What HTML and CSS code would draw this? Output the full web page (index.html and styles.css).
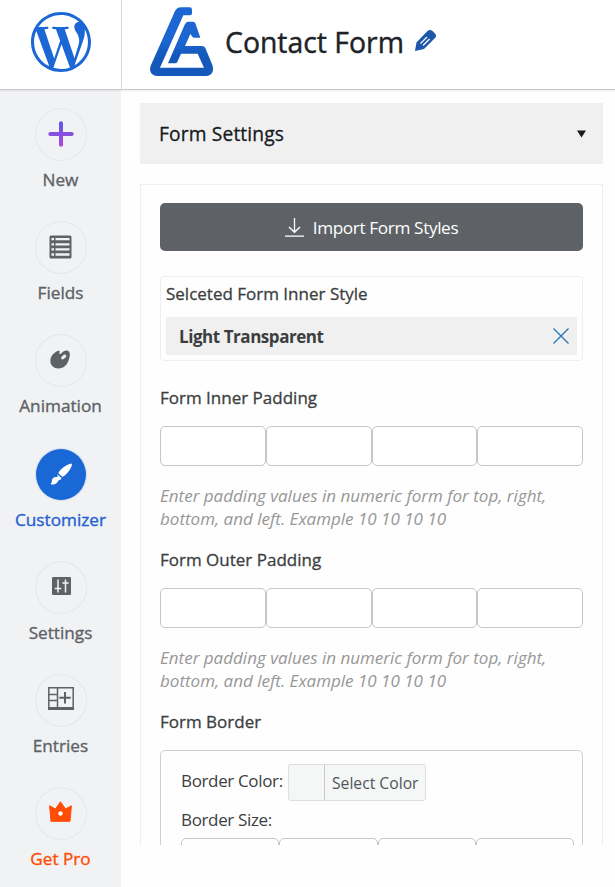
FILE: index.html
```
<!DOCTYPE html>
<html lang="en">
<head>
    <meta charset="UTF-8">
    <meta name="viewport" content="width=device-width, initial-scale=1.0">
    <title>Contact Form</title>
    <link rel="stylesheet" href="styles.css">
</head>
<body>
    <!-- Top bar -->
    <header class="header">
        <a class="wp-logo" href="#">
            <svg width="60" height="60" viewBox="0 0 24 24"><path fill-rule="evenodd" d="M21.469 6.825c.84 1.537 1.318 3.3 1.318 5.175 0 3.979-2.156 7.456-5.363 9.325l3.295-9.527c.615-1.54.82-2.771.82-3.864 0-.405-.026-.78-.07-1.11m-7.981.105c.647-.03 1.232-.105 1.232-.105.582-.075.514-.93-.067-.899 0 0-1.755.135-2.88.135-1.064 0-2.85-.15-2.85-.15-.585-.03-.661.855-.075.885 0 0 .54.061 1.125.09l1.68 4.605-2.37 7.08L5.354 6.9c.649-.03 1.234-.1 1.234-.1.585-.075.516-.93-.065-.896 0 0-1.746.138-2.874.138-.2 0-.438-.008-.69-.015C4.911 3.15 8.235 1.215 12 1.215c2.809 0 5.365 1.072 7.286 2.833-.046-.003-.091-.009-.141-.009-1.06 0-1.812.923-1.812 1.914 0 .89.513 1.643 1.06 2.531.411.72.89 1.643.89 2.977 0 .915-.354 1.994-.821 3.479l-1.075 3.585-3.9-11.61.001.014zM12 22.784c-1.059 0-2.081-.153-3.048-.437l3.237-9.406 3.315 9.087c.024.053.05.101.078.149-1.12.393-2.325.609-3.582.609M1.211 12c0-1.564.336-3.05.935-4.39L7.29 21.709C3.694 19.96 1.212 16.271 1.211 12M12 0C5.385 0 0 5.385 0 12s5.385 12 12 12 12-5.385 12-12S18.615 0 12 0"/></svg>
        </a>
        <div class="title-bar">
            <svg class="brand" width="64" height="70" viewBox="0 0 192 210">
                <defs>
                    <linearGradient id="brand-fill" x1="0" y1="0" x2="0" y2="1">
                        <stop offset="0.5" stop-color="#1b66d0"/>
                        <stop offset="0.7" stop-color="#1558bb"/>
                    </linearGradient>
                </defs>
                <path fill="url(#brand-fill)" d="M2 176 L74 14 Q80 1 94 1 H119 Q126 1 126 8 V19 Q126 25 120 25 H100 L30 182 H162 L143 140 H93 L82 165 Q80 169 75 169 H54 L104 53 Q108 44 114 44 H130 Q134 44 136 49 L151 92 H132 Q128 92 126 88 L121 81 L105 117 H156 Q163 117 166 123 L187 174 Q194 195 178 205 Q175 207 168 207 H21 Q4 206 0 190 Q0 182 2 176 Z"/>
            </svg>
            <h1>Contact Form</h1>
            <svg class="edit" width="23" height="23" viewBox="0 0 23 23">
                <path fill="#1c57ab" d="M1 22 2.5 13.5 13.5 2 Q16 0 18.5 2 L21.5 5 Q23 7 21 9 L10 20Z"/>
                <path stroke="#fff" stroke-width="1.2" d="M6.500 14.500 13 8M9 16.500 15.500 10"/>
            </svg>
        </div>
    </header>

    <div class="layout">
        <!-- Sidebar -->
        <nav class="sidebar">
            <a class="nav-item" href="#">
                <span class="nav-icon">
                    <svg width="26" height="26" viewBox="0 0 26 26" fill="none" stroke="url(#plus-fill)" stroke-width="4" stroke-linecap="round">
                        <defs>
                            <linearGradient id="plus-fill" gradientUnits="userSpaceOnUse" x1="0" y1="0" x2="0" y2="26">
                                <stop offset="0" stop-color="#5a5be6"/>
                                <stop offset="0.5" stop-color="#8650df"/>
                                <stop offset="1" stop-color="#ba43da"/>
                            </linearGradient>
                        </defs>
                        <path d="M13 2.300V23.700M2.300 13H23.700"/>
                    </svg>
                </span>
                <span>New</span>
            </a>
            <a class="nav-item" href="#">
                <span class="nav-icon">
                    <svg width="23" height="24" viewBox="0 0 23 24">
                        <rect x="0.500" y="0.500" width="22" height="23" rx="1.500" fill="#5d6267"/>
                        <path stroke="#f1f2f4" stroke-width="2.300" d="M2.500 4.200H5M2.500 9.300H5M2.500 14.400H5M2.500 19.500H5M6.500 4.200H20.500M6.500 9.300H20.500M6.500 14.400H20.500M6.500 19.500H20.500"/>
                    </svg>
                </span>
                <span>Fields</span>
            </a>
            <a class="nav-item" href="#">
                <span class="nav-icon nav-icon-palette">
                    <svg width="20" height="19" viewBox="0 0 20 19">
                        <path fill="#5d6267" d="M7.500 1C9 .2 10.200 1 9.500 2.500C9 4 10.200 4.500 11.500 3.200C13 1.500 15 .3 17 .6C20 1 20.500 4.500 19 9C17.500 14.500 14 18.500 8.500 18.500C3.500 18.500 0 15 .4 10C.7 6 3.500 3 7.500 1Z"/>
                        <ellipse cx="13.700" cy="7" rx="3" ry="1.700" transform="rotate(-38 13.700 7)" fill="#f1f2f4"/>
                    </svg>
                </span>
                <span>Animation</span>
            </a>
            <a class="nav-item active" href="#">
                <span class="nav-icon">
                    <svg width="22" height="22" viewBox="0 0 22 22" fill="#fff">
                        <path d="M21.500 .6C22.300 1.200 21.800 3 21 4.500C19 8.500 16 12 12.500 14L8.300 10.300C10 6 17 1.500 21.500 .6Z"/>
                        <path d="M7.500 11.500 11.500 15C11 17 9.500 16.800 8.500 17.500C7.500 20.500 4 22.500 .5 21C2.500 19.500 1.500 18 2.300 16C3.300 14 5.500 13.800 7.500 14C7.800 13 7.300 12.500 7.500 11.500Z"/>
                    </svg>
                </span>
                <span>Customizer</span>
            </a>
            <a class="nav-item" href="#">
                <span class="nav-icon nav-icon-sliders">
                    <svg width="19" height="18" viewBox="0 0 19 18">
                        <rect width="19" height="18" rx="1" fill="#5d6267"/>
                        <path stroke="#f1f2f4" stroke-width="1.500" d="M6 2.500V15.500M2.800 11.500H9.200M13.500 2.500V15.500M10.300 6H16.700"/>
                    </svg>
                </span>
                <span>Settings</span>
            </a>
            <a class="nav-item" href="#">
                <span class="nav-icon nav-icon-table">
                    <svg width="26" height="23" viewBox="0 0 26 23" fill="none" stroke="#5d6267">
                        <path stroke-width="1.500" d="M.8 22V.8H25.200V22M9.500 1V21M1 7.500H9.500M1 13.500H9.500"/>
                        <path stroke-width="3" d="M0 21.500H26"/>
                        <path stroke-width="2" d="M17 5V16.500M11.300 10.700H22.700"/>
                    </svg>
                </span>
                <span>Entries</span>
            </a>
            <a class="nav-item pro" href="#">
                <span class="nav-icon nav-icon-crown">
                    <svg width="23" height="21" viewBox="0 0 23 21">
                        <path fill="#ff4d05" stroke="#ff4d05" stroke-linejoin="round" d="M.6 4.800 6.500 8 11.500 .8 16.500 8 22.400 4.800 21 20.300H2Z"/>
                        <circle cx="11.500" cy="12.500" r="2.200" fill="#fff"/>
                    </svg>
                </span>
                <span>Get Pro</span>
            </a>
        </nav>

        <!-- Form customizer -->
        <main class="content">
            <div class="accordion">
                <span>Form Settings</span>
                <svg width="9" height="8" viewBox="0 0 9 8"><path fill="#17191c" d="M0 .5H9L4.500 7.500Z"/></svg>
            </div>

            <div class="panel">
                <button type="button" class="import-btn">
                    <svg width="19" height="19" viewBox="0 0 19 19" fill="none" stroke="#fff" stroke-width="1.300">
                        <path d="M9.500 0V14M4 9 9.500 14.300 15 9M0 18.200H19"/>
                    </svg>
                    <span>Import Form Styles</span>
                </button>

                <div class="style-box">
                    <div class="style-title">Selceted Form Inner Style</div>
                    <div class="style-name">
                        <strong>Light Transparent</strong>
                        <svg width="16" height="16" viewBox="0 0 16 16" stroke="#2271b1" stroke-width="1.200"><path d="M.5.5 15.500 15.500M15.500.5.5 15.500"/></svg>
                    </div>
                </div>

                <div class="form-group">
                    <label>Form Inner Padding</label>
                    <div class="inputs">
                        <input type="text"><input type="text"><input type="text"><input type="text">
                    </div>
                    <p class="hint">Enter padding values in numeric form for top, right,<br>bottom, and left. Example 10 10 10 10</p>
                </div>

                <div class="form-group">
                    <label>Form Outer Padding</label>
                    <div class="inputs">
                        <input type="text"><input type="text"><input type="text"><input type="text">
                    </div>
                    <p class="hint">Enter padding values in numeric form for top, right,<br>bottom, and left. Example 10 10 10 10</p>
                </div>

                <div class="form-group">
                    <label>Form Border</label>
                    <div class="border-box">
                        <div class="color-row">
                            <span class="color-label">Border Color:</span>
                            <button type="button" class="color-btn"><span>Select Color</span></button>
                        </div>
                        <div class="size-label">Border Size:</div>
                        <div class="inputs">
                            <input type="text"><input type="text"><input type="text"><input type="text">
                        </div>
                    </div>
                </div>
            </div>
        </main>
    </div>
</body>
</html>
```
FILE: styles.css
```
* {
    margin: 0;
    padding: 0;
    box-sizing: border-box;
    font-family: "Open Sans", "Noto Sans", sans-serif;
}

body {
    background-color: #fefefe;
    color: #3c3e40;
    font-size: 16.5px;
    height: 887px;
    overflow: hidden;
}

svg {
    display: block;
    flex-shrink: 0;
}

.header {
    position: relative;
    display: flex;
    height: 90px;
    background-color: #fff;
    border-bottom: 1px solid #c9c9cb;
    box-shadow: 0 1px 2px rgba(0, 0, 0, 0.08);
}

.wp-logo {
    width: 122px;
    padding: 12px 0 0 31px;
    border-right: 1px solid #d5d5d7;
    fill: #1a67d5;
}

.title-bar {
    display: flex;
    align-items: flex-start;
    padding-left: 28px;
}

.brand {
    margin-top: 7px;
}

.title-bar h1 {
    width: 179px;
    margin: 22px 0 0 11px;
    font-size: 28.4px;
    font-weight: 500;
    line-height: 40px;
    color: #1d2327;
    white-space: nowrap;
    -webkit-text-stroke: 0.4px;
}

.edit {
    margin: 29px 0 0 10px;
}

.layout {
    display: flex;
    height: 797px;
}

/* Sidebar */
.sidebar {
    width: 121px;
    padding-top: 18px;
    background-color: #f1f2f4;
}

.nav-item {
    display: flex;
    flex-direction: column;
    align-items: center;
    height: 113.2px;
    font-size: 17.2px;
    font-weight: 500;
    line-height: 24px;
    color: #5d6267;
    text-decoration: none;
    -webkit-text-stroke: 0.35px;
}

.nav-icon {
    display: flex;
    align-items: center;
    justify-content: center;
    width: 52px;
    height: 53px;
    margin-bottom: 7px;
    padding-bottom: 2px;
    border: 1px solid #e6e7e9;
    border-radius: 50%;
}

.nav-icon-palette {
    padding: 0 2px 3px 0;
}

.nav-icon-sliders {
    padding: 0 0 2px 1px;
}

.nav-icon-table {
    padding-bottom: 3px;
}

.nav-icon-crown {
    padding-bottom: 4px;
}

.active {
    color: #1f60d2;
}

.active .nav-icon {
    padding-bottom: 1px;
    background-color: #1968d6;
    border-color: #dce4f0;
}

.pro {
    color: #ff4d05;
}

/* Content */
.content {
    flex: 1;
    height: 755px;
    padding: 13px 12px 0 19px;
    overflow: hidden;
}

.accordion {
    display: flex;
    justify-content: space-between;
    align-items: center;
    height: 61px;
    padding: 0 17px 0 19px;
    background-color: #f0f0f0;
    font-size: 19.2px;
    font-weight: 500;
    letter-spacing: 0.15px;
    color: #17191c;
    -webkit-text-stroke: 0.3px;
}

.panel {
    height: 800px;
    margin-top: 20px;
    padding: 18px 19px;
    border: 1px solid #eeeeef;
}

.import-btn {
    display: flex;
    align-items: center;
    justify-content: center;
    gap: 9px;
    width: 100%;
    height: 48px;
    margin-bottom: 25px;
    border: none;
    border-radius: 5px;
    background-color: #5e6267;
    color: #fff;
    font-size: 17.2px;
    letter-spacing: -0.37px;
}

.style-box {
    height: 85px;
    margin-bottom: 25px;
    padding: 5px;
    border: 1px solid #eeeeef;
    border-radius: 4px;
}

.style-title {
    height: 35px;
    font-size: 17px;
    font-weight: 500;
    line-height: 23px;
    -webkit-text-stroke: 0.3px;
}

.style-name {
    display: flex;
    align-items: center;
    justify-content: space-between;
    height: 38px;
    padding: 0 8px 0 13px;
    background-color: #f0f0f0;
    font-size: 17px;
    letter-spacing: -0.45px;
}

.form-group label {
    display: block;
    margin-bottom: 16px;
    font-size: 17px;
    font-weight: 500;
    line-height: 24px;
    -webkit-text-stroke: 0.3px;
}

.inputs {
    display: flex;
}

.inputs input {
    flex: 1;
    min-width: 0;
    height: 40px;
    border: 1px solid #c5c6c7;
    border-radius: 5px;
    background-color: #fff;
}

.hint {
    margin: 18px 0;
    color: #979797;
    font-size: 17px;
    font-style: italic;
    line-height: 23px;
    white-space: nowrap;
}

.border-box {
    height: 150px;
    padding: 13px 8px 0 20px;
    border: 1px solid #d0d0d2;
    border-radius: 5px;
}

.color-row {
    display: flex;
}

.color-label {
    width: 107px;
    font-size: 17px;
    letter-spacing: -0.35px;
    line-height: 33px;
    white-space: nowrap;
}

.color-btn {
    width: 138px;
    height: 37px;
    padding-left: 35px;
    border: 1px solid #dcdddd;
    border-radius: 3px;
    background-color: #f5f7f6;
    color: #50555a;
    font-size: 15.7px;
}

.color-btn span {
    display: block;
    padding: 2px 0 0 7px;
    border-left: 1px solid #c8c9ca;
    line-height: 33px;
    text-align: left;
    white-space: nowrap;
}

.size-label {
    margin: 7px 0 6px;
    font-size: 17px;
    letter-spacing: -0.35px;
    line-height: 24px;
}
```
